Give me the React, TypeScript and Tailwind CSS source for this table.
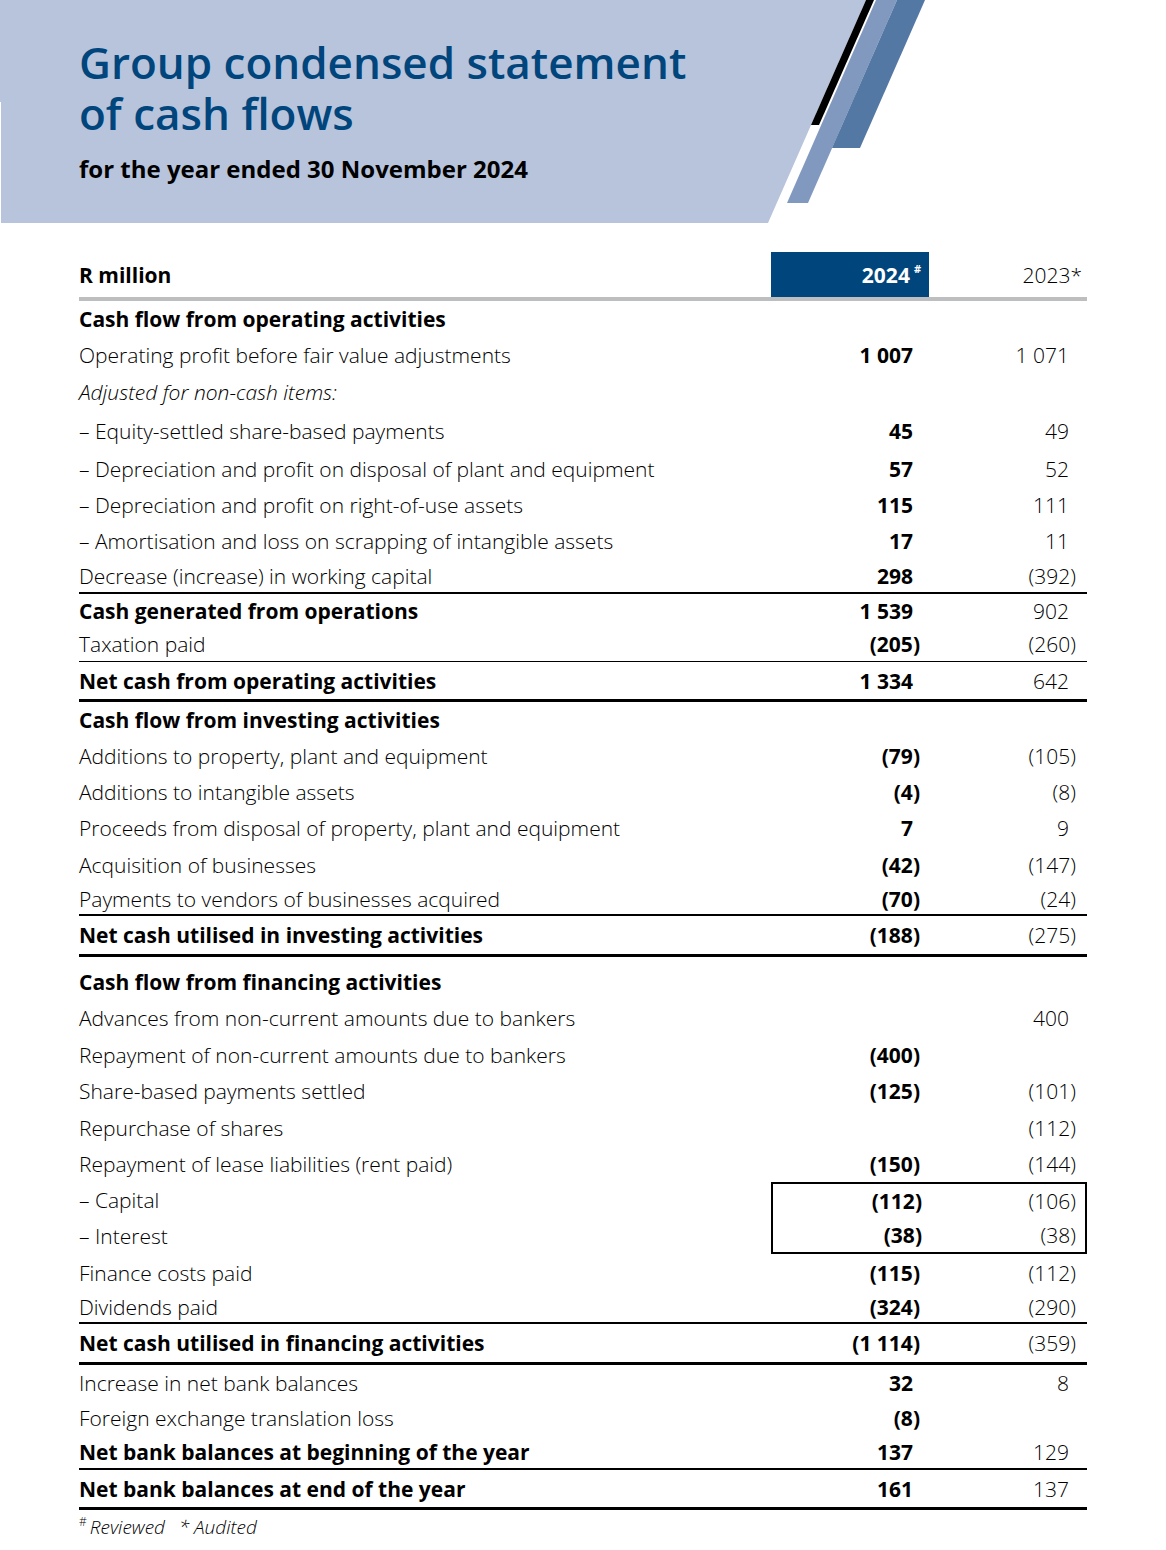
import React from "react";

type Row = {
  label: string;
  kind: "section" | "item" | "italic" | "total";
  a?: string;
  b?: string;
  h: number;
  pt?: number;
  border?: "thin" | "mid" | "thick";
};

const FONT = { fontFamily: '"Open Sans", "Liberation Sans", sans-serif' };

function Num({ v, bold }: { v?: string; bold?: boolean }) {
  if (!v) return null;
  const neg = v.startsWith("(");
  const inner = neg ? v.slice(1, -1) : v;
  return (
    <span className={bold ? "font-bold" : "font-light"}>
      {neg ? "(" : ""}
      {inner}
      {neg ? <span className="mr-[-7px]">)</span> : null}
    </span>
  );
}

function Label({ r }: { r: Row }) {
  const cls =
    r.kind === "section" || r.kind === "total"
      ? "font-bold"
      : r.kind === "italic"
      ? "font-light italic"
      : "font-light";
  return <span className={cls}>{r.label}</span>;
}

function TableRow({ r }: { r: Row }) {
  const borderCls =
    r.border === "thin"
      ? "border-b border-black"
      : r.border === "mid"
      ? "border-b-2 border-black"
      : r.border === "thick"
      ? "border-b-[3px] border-black"
      : "";
  return (
    <div
      className={`flex items-center box-content ${borderCls}`}
      style={{ height: r.h, paddingTop: r.pt ?? 0 }}
    >
      <div className="flex-1 whitespace-nowrap">
        <Label r={r} />
      </div>
      <div className="w-[158px] pr-[16px] text-right">
        <Num v={r.a} bold />
      </div>
      <div className="w-[158px] pr-[18px] text-right">
        <Num v={r.b} />
      </div>
    </div>
  );
}

const rowsA: Row[] = [
  { label: "Cash flow from operating activities", kind: "section", h: 36 },
  { label: "Operating profit before fair value adjustments", kind: "item", a: "1 007", b: "1 071", h: 36 },
  { label: "Adjusted for non-cash items:", kind: "italic", h: 38 },
  { label: "– Equity-settled share-based payments", kind: "item", a: "45", b: "49", h: 40 },
  { label: "– Depreciation and profit on disposal of plant and equipment", kind: "item", a: "57", b: "52", h: 36 },
  { label: "– Depreciation and profit on right-of-use assets", kind: "item", a: "115", b: "111", h: 36 },
  { label: "– Amortisation and loss on scrapping of intangible assets", kind: "item", a: "17", b: "11", h: 36 },
  { label: "Decrease (increase) in working capital", kind: "item", a: "298", b: "(392)", h: 33, border: "mid" },
  { label: "Cash generated from operations", kind: "total", a: "1 539", b: "902", h: 33 },
  { label: "Taxation paid", kind: "item", a: "(205)", b: "(260)", h: 34, border: "thin" },
  { label: "Net cash from operating activities", kind: "total", a: "1 334", b: "642", h: 37, border: "thick" },
  { label: "Cash flow from investing activities", kind: "section", h: 35 },
  { label: "Additions to property, plant and equipment", kind: "item", a: "(79)", b: "(105)", h: 37 },
  { label: "Additions to intangible assets", kind: "item", a: "(4)", b: "(8)", h: 36 },
  { label: "Proceeds from disposal of property, plant and equipment", kind: "item", a: "7", b: "9", h: 36 },
  { label: "Acquisition of businesses", kind: "item", a: "(42)", b: "(147)", h: 37 },
  { label: "Payments to vendors of businesses acquired", kind: "item", a: "(70)", b: "(24)", h: 31, border: "mid" },
  { label: "Net cash utilised in investing activities", kind: "total", a: "(188)", b: "(275)", h: 38, border: "thick" },
  { label: "Cash flow from financing activities", kind: "section", h: 36, pt: 7 },
  { label: "Advances from non-current amounts due to bankers", kind: "item", b: "400", h: 36 },
  { label: "Repayment of non-current amounts due to bankers", kind: "item", a: "(400)", h: 37 },
  { label: "Share-based payments settled", kind: "item", a: "(125)", b: "(101)", h: 36 },
  { label: "Repurchase of shares", kind: "item", b: "(112)", h: 37 },
  { label: "Repayment of lease liabilities (rent paid)", kind: "item", a: "(150)", b: "(144)", h: 36 },
];

const rowsB: Row[] = [
  { label: "Finance costs paid", kind: "item", a: "(115)", b: "(112)", h: 37 },
  { label: "Dividends paid", kind: "item", a: "(324)", b: "(290)", h: 31, border: "mid" },
  { label: "Net cash utilised in financing activities", kind: "total", a: "(1 114)", b: "(359)", h: 38, border: "thick" },
  { label: "Increase in net bank balances", kind: "item", a: "32", b: "8", h: 35 },
  { label: "Foreign exchange translation loss", kind: "item", a: "(8)", h: 36 },
  { label: "Net bank balances at beginning of the year", kind: "total", a: "137", b: "129", h: 32, border: "mid" },
  { label: "Net bank balances at end of the year", kind: "total", a: "161", b: "137", h: 37, border: "thick" },
];

function HeaderGraphic() {
  return (
    <svg
      className="absolute left-0 top-0"
      width="1166"
      height="223"
      viewBox="0 0 1166 223"
    >
      <polygon points="0,0 866,0 768,223 1,223 1,102 0,102" fill="#b7c4dc" />
      <polygon points="866,0 874,0 819,125 811,125" fill="#000000" />
      <polygon points="876,0 897,0 808,203 787,203" fill="#8299bf" />
      <polygon points="897,0 925,0 860,148 832,148" fill="#5478a4" />
    </svg>
  );
}

export default function App() {
  return (
    <div className="w-[1166px] min-h-[1550px] bg-white text-black" style={FONT}>
      <div className="relative h-[223px]">
        <HeaderGraphic />
        <div className="relative pl-[79px] pt-[37px]">
          <h1 className="text-[44px] font-semibold text-[#00457c]">
            <div className="h-[51px] leading-[51px]">Group condensed statement</div>
            <div className="h-[51px] leading-[51px]">of cash flows</div>
          </h1>
          <p className="mt-[15px] text-[24px] leading-[30px] font-bold">
            for the year ended 30 November 2024
          </p>
        </div>
      </div>

      <div className="mx-[79px] mt-[29px] text-[21px] leading-[26px]">
        <div className="flex h-[45px] items-center">
          <div className="flex-1 font-bold">R million</div>
          <div className="w-[158px] h-full bg-[#00457c] text-white font-bold flex items-center justify-end pr-[8px]">
            <span>2024</span>
            <span className="ml-[4px] self-start mt-[11px] text-[11px] leading-[11px] font-bold">#</span>
          </div>
          <div className="w-[158px] pr-[5px] text-right font-light">2023*</div>
        </div>
        <div className="h-[4px] bg-[#bcbec0]" />

        {rowsA.map((r, i) => (
          <TableRow key={i} r={r} />
        ))}

        <div className="flex">
          <div className="flex-1 font-light">
            <div className="h-[36px] flex items-center">– Capital</div>
            <div className="h-[36px] flex items-center">– Interest</div>
          </div>
          <div className="w-[316px] border-2 border-black">
            <div className="h-[34px] flex items-center">
              <div className="w-[156px] pr-[14px] text-right">
                <Num v="(112)" bold />
              </div>
              <div className="w-[156px] pr-[16px] text-right">
                <Num v="(106)" />
              </div>
            </div>
            <div className="h-[34px] flex items-center">
              <div className="w-[156px] pr-[14px] text-right">
                <Num v="(38)" bold />
              </div>
              <div className="w-[156px] pr-[16px] text-right">
                <Num v="(38)" />
              </div>
            </div>
          </div>
        </div>

        {rowsB.map((r, i) => (
          <TableRow key={i} r={r} />
        ))}

        <div className="h-[34px] flex items-center text-[19px] font-light italic">
          <span className="not-italic text-[12px] leading-[12px] self-start mt-[6px] mr-[3px]">#</span>
          <span>Reviewed</span>
          <span className="ml-[14px]">* Audited</span>
        </div>
      </div>
    </div>
  );
}
